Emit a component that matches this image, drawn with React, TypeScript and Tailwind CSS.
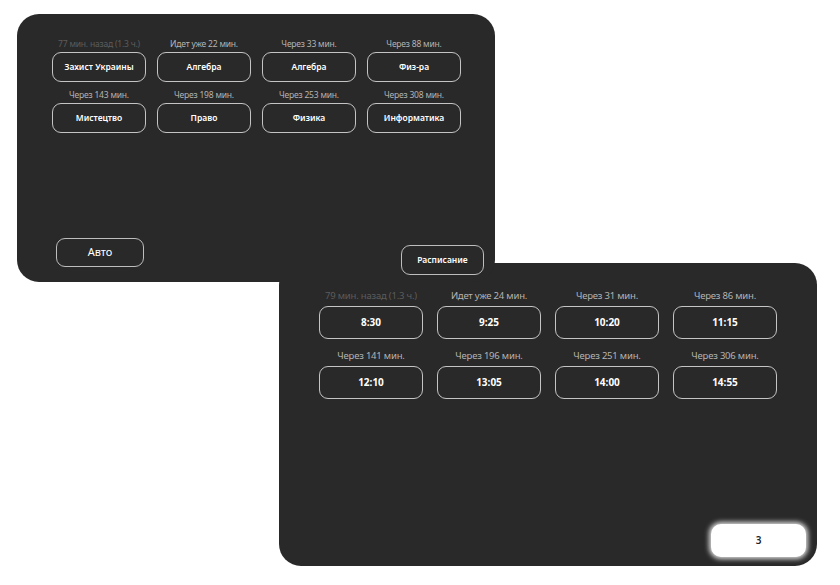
const subjects = [
  { note: '77 мин. назад (1.3 ч.)', title: 'Захист Украины', past: true },
  { note: 'Идет уже 22 мин.', title: 'Алгебра' },
  { note: 'Через 33 мин.', title: 'Алгебра' },
  { note: 'Через 88 мин.', title: 'Физ-ра' },
  { note: 'Через 143 мин.', title: 'Мистецтво' },
  { note: 'Через 198 мин.', title: 'Право' },
  { note: 'Через 253 мин.', title: 'Физика' },
  { note: 'Через 308 мин.', title: 'Информатика' },
];

const times = [
  { note: '79 мин. назад (1.3 ч.)', title: '8:30', past: true },
  { note: 'Идет уже 24 мин.', title: '9:25' },
  { note: 'Через 31 мин.', title: '10:20' },
  { note: 'Через 86 мин.', title: '11:15' },
  { note: 'Через 141 мин.', title: '12:10' },
  { note: 'Через 196 мин.', title: '13:05' },
  { note: 'Через 251 мин.', title: '14:00' },
  { note: 'Через 306 мин.', title: '14:55' },
];

const font = { fontFamily: '"Noto Sans", "Open Sans", sans-serif' };

export default function App() {
  return (
    <div className="relative h-[585px] w-[840px] overflow-hidden bg-white" style={font}>
      {/* time panel (behind) */}
      <div className="absolute left-[279px] top-[263px] flex h-[303px] w-[538px] flex-col rounded-[22px] bg-[#292929] pt-[26px] pl-[40px]">
        <div className="grid grid-cols-[repeat(4,104px)] gap-x-[14px] gap-y-[10px]">
          {times.map((t) => (
            <div key={t.title} className="flex flex-col items-center gap-[3px]">
              <span
                className={
                  'h-[14px] text-[9.5px] leading-[14px] tracking-[-0.2px] ' +
                  (t.past ? 'text-[#5c5c5c]' : 'text-[#b4b4b4]')
                }
              >
                {t.note}
              </span>
              <div className="flex h-[33px] w-full items-center justify-center rounded-[9px] border-[1.5px] border-[#c4c4c4] text-[10px] font-bold text-white">
                {t.title}
              </div>
            </div>
          ))}
        </div>
        <div className="flex-1" />
        <div className="flex justify-end pr-[11px] pb-[9px]">
          <div className="flex h-[33px] w-[95px] items-center justify-center rounded-[10px] bg-white text-[10px] font-semibold text-[#222] shadow-[0_0_5px_2px_rgba(255,255,255,0.85)]">
            3
          </div>
        </div>
      </div>

      {/* subject panel (front) */}
      <div className="absolute left-[17px] top-[14px] z-10 flex h-[268px] w-[478px] flex-col rounded-[22px] bg-[#292929] pt-[23px]">
        <div className="grid grid-cols-[repeat(4,94px)] gap-x-[11px] gap-y-[6px] pl-[35px]">
          {subjects.map((s, i) => (
            <div key={i} className="flex flex-col items-center gap-[1px]">
              <span
                className={
                  'h-[14px] text-[8.5px] leading-[14px] tracking-[-0.2px] ' +
                  (s.past ? 'text-[#5c5c5c]' : 'text-[#b4b4b4]')
                }
              >
                {s.note}
              </span>
              <div className="flex h-[30px] w-full items-center justify-center rounded-[9px] border-[1.5px] border-[#c4c4c4] text-[8.5px] font-semibold text-white">
                {s.title}
              </div>
            </div>
          ))}
        </div>
        <div className="flex-1" />
        <div className="flex items-end justify-between pl-[39px] pr-[11px]">
          <div className="mb-[15px] flex h-[29px] w-[88px] items-center justify-center rounded-[9px] border-[1.5px] border-[#bdbdbd] text-[11px] text-white">
            Авто
          </div>
          <div className="mb-[7px] flex h-[30px] w-[83px] items-center justify-center rounded-[9px] border-[1.5px] border-[#bdbdbd] text-[8.5px] font-semibold text-white">
            Расписание
          </div>
        </div>
      </div>
    </div>
  );
}
